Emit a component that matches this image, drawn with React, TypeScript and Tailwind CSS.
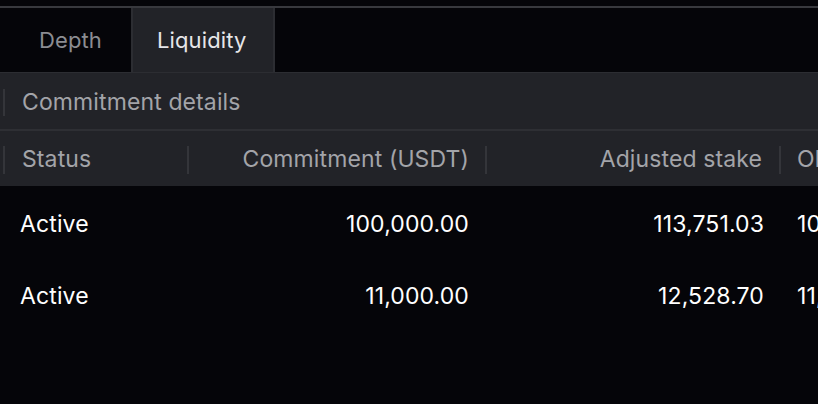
import React from 'react';

const rows = [
  { status: 'Active', commitment: '100,000.00', stake: '113,751.03', next: '100,000.00' },
  { status: 'Active', commitment: '11,000.00', stake: '12,528.70', next: '11,000.00' },
];

export default function App() {
  return (
    <div className="w-[818px] h-[404px] overflow-hidden bg-[#050509] text-[23px] font-['Inter',sans-serif] tracking-[0.005em]">
      <div className="h-[6px]" />
      <div className="h-[2px] bg-[#38393e]" />

      {/* tabs */}
      <div className="flex h-[64px] text-[22px]">
        <div className="w-[131px] shrink-0 flex items-center pl-[39px] text-[#8c8d92]">Depth</div>
        <div className="w-[144px] shrink-0 flex items-center pl-[24px] bg-[#222328] border-x-2 border-[#2c2d32] text-[#e6e6e9]">
          Liquidity
        </div>
        <div className="flex-1" />
      </div>

      {/* panel header */}
      <div className="bg-[#222328] border-t border-[#2c2d32]">
        <div className="h-[58px] flex items-center border-b-2 border-[#2e2f34] pt-[3px]">
          <div className="ml-[3px] w-[2px] h-[27px] bg-[#34353a]" />
          <span className="pl-[17px] text-[#a3a4a9]">Commitment details</span>
        </div>
        <div className="h-[55px] flex items-center text-[#a3a4a9] whitespace-nowrap pt-[2px]">
          <div className="ml-[3px] w-[2px] h-[28px] shrink-0 bg-[#34353a]" />
          <div className="w-[182px] shrink-0 pl-[17px]">Status</div>
          <div className="w-[2px] h-[28px] shrink-0 bg-[#34353a]" />
          <div className="w-[296px] shrink-0 text-right pr-[16px]">Commitment (USDT)</div>
          <div className="w-[2px] h-[28px] shrink-0 bg-[#34353a]" />
          <div className="w-[292px] shrink-0 text-right pr-[17px]">Adjusted stake</div>
          <div className="w-[2px] h-[28px] shrink-0 bg-[#34353a]" />
          <div className="shrink-0 pl-[16px]">Obligation</div>
        </div>
      </div>

      {/* rows */}
      <div className="text-white whitespace-nowrap">
        {rows.map((r, i) => (
          <div key={i} className="h-[72px] flex items-center pt-[4px]">
            <div className="w-[187px] shrink-0 pl-[20px]">{r.status}</div>
            <div className="w-[298px] shrink-0 text-right pr-[16px]">{r.commitment}</div>
            <div className="w-[294px] shrink-0 text-right pr-[15px]">{r.stake}</div>
            <div className="shrink-0 pl-[18px]">{r.next}</div>
          </div>
        ))}
      </div>
    </div>
  );
}
